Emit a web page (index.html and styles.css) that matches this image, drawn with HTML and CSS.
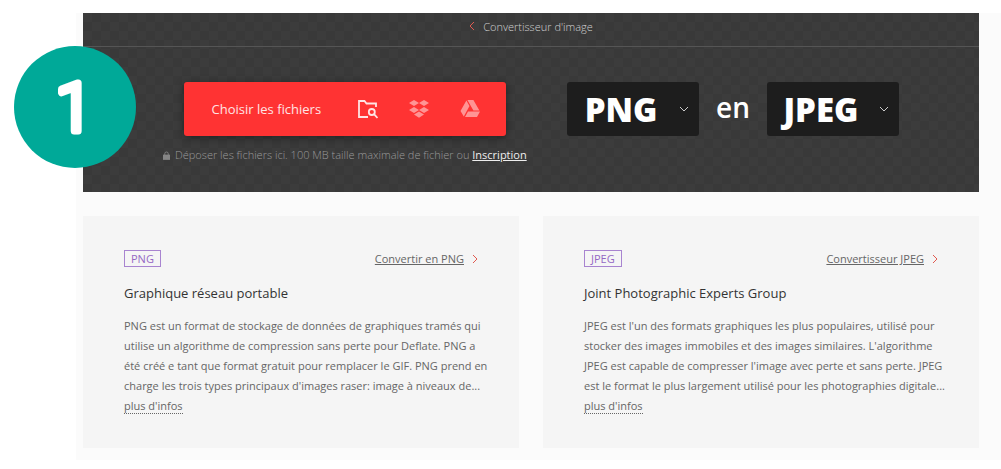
FILE: index.html
```html
<!DOCTYPE html>
<html lang="fr">
<head>
    <meta charset="UTF-8">
    <meta name="viewport" content="width=device-width, initial-scale=1.0">
    <title>Convertisseur PNG en JPEG</title>
    <link rel="stylesheet" href="styles.css">
</head>
<body>
    <div class="page">
        <header class="hero">
            <!-- Step number -->
            <svg class="step" viewBox="0 0 122 122" role="img" aria-label="Étape 1">
                <circle cx="61" cy="61" r="61"/>
                <text x="60" y="85" text-anchor="middle">1</text>
            </svg>

            <nav class="breadcrumb">
                <a href="#">
                    <svg class="chevron" viewBox="0 0 6 10"><path d="M5 1L1 5l4 4"/></svg>
                    Convertisseur d'image
                </a>
            </nav>

            <div class="converter">
                <div class="upload">
                    <div class="upload-bar">
                        <button type="button" class="choose">Choisir les fichiers</button>
                        <button type="button" class="source" aria-label="Ordinateur">
                            <svg viewBox="0 0 20 20" fill="none" stroke="#ffe4e4" stroke-width="1.8">
                                <path d="M10 18H1V2h5.500l2 2.500H18V8"/>
                                <circle cx="13.800" cy="13" r="3"/>
                                <path d="M16 15.200l3.500 3.800"/>
                            </svg>
                        </button>
                        <button type="button" class="source" aria-label="Dropbox">
                            <svg viewBox="0 0 20 20" fill="#ff9494">
                                <path d="M5 1l5 3-5 3-5-3zM15 1l5 3-5 3-5-3zM5 8l5 3-5 3-5-3zM15 8l5 3-5 3-5-3zM10 12.500l5 3-5 3.300-5-3.300z"/>
                            </svg>
                        </button>
                        <button type="button" class="source" aria-label="Google Drive">
                            <svg viewBox="0 0 20 20" fill="#ff9494">
                                <path d="M6.400 1.500L9.500 7 3.800 17.500.500 12zM7.400 1h6l6 10.500h-6zM8 12.500h12L17 18H5z"/>
                            </svg>
                        </button>
                    </div>
                    <p class="note">
                        <svg class="lock" viewBox="0 0 8 10"><path d="M2 5V3a2 2 0 0 1 4 0v2" fill="none" stroke="#858585"/><path d="M0 4h8v6H0z" fill="#858585"/></svg>
                        <span>Déposer les fichiers ici. 100 MB taille maximale de fichier ou <a href="#">Inscription</a></span>
                    </p>
                </div>

                <div class="formats">
                    <div class="format">
                        <select aria-label="Format source">
                            <option>PNG</option>
                            <option>JPEG</option>
                        </select>
                        <svg class="caret" viewBox="0 0 10 6"><path d="M1 1l4 4 4-4"/></svg>
                    </div>
                    <span class="to">en</span>
                    <div class="format">
                        <select aria-label="Format cible">
                            <option>JPEG</option>
                            <option>PNG</option>
                        </select>
                        <svg class="caret" viewBox="0 0 10 6"><path d="M1 1l4 4 4-4"/></svg>
                    </div>
                </div>
            </div>
        </header>

        <main class="cards">
            <section class="card">
                <div class="card-top">
                    <span class="tag">PNG</span>
                    <span class="card-link">
                        <a href="#">Convertir en PNG</a>
                        <svg class="chevron" viewBox="0 0 6 10"><path d="M1 1l4 4-4 4"/></svg>
                    </span>
                </div>
                <h2>Graphique réseau portable</h2>
                <p>PNG est un format de stockage de données de graphiques tramés qui utilise un algorithme de compression sans perte pour Deflate. PNG a été créé e tant que format gratuit pour remplacer le GIF. PNG prend en charge les trois types principaux d'images raser: image à niveaux de...</p>
                <a class="more" href="#">plus d'infos</a>
            </section>

            <section class="card">
                <div class="card-top">
                    <span class="tag">JPEG</span>
                    <span class="card-link">
                        <a href="#">Convertisseur JPEG</a>
                        <svg class="chevron" viewBox="0 0 6 10"><path d="M1 1l4 4-4 4"/></svg>
                    </span>
                </div>
                <h2>Joint Photographic Experts Group</h2>
                <p>JPEG est l'un des formats graphiques les plus populaires, utilisé pour stocker des images immobiles et des images similaires. L'algorithme JPEG est capable de compresser l'image avec perte et sans perte. JPEG est le format le plus largement utilisé pour les photographies digitale...</p>
                <a class="more" href="#">plus d'infos</a>
            </section>
        </main>
    </div>
</body>
</html>
```
FILE: styles.css
```css
* {
    box-sizing: border-box;
}

body {
    margin: 0;
    background: #fff;
    font-family: "Open Sans", "Noto Sans", sans-serif;
    font-size: 11px;
    color: #666;
}

.page {
    margin: 13px 0 8px 76px;
    padding: 0 22px 12px 7px;
    background: #fbfbfb;
}

/* Dark header with a checkerboard */
.hero {
    position: relative;
    padding-bottom: 28px;
    background: repeating-conic-gradient(#393939 0 25%, #3c3c3c 0 50%) 0 0 / 18px 18px;
}

.step {
    position: absolute;
    top: 33px;
    left: -69px;
    width: 122px;
    height: 122px;
}

.step circle {
    fill: #00a998;
}

.step text {
    font-family: Roboto, sans-serif;
    font-size: 66px;
    font-weight: 300;
    fill: #fff;
    stroke: #fff;
    stroke-width: 7px;
    stroke-linejoin: round;
}

.breadcrumb {
    display: flex;
    justify-content: center;
    height: 34px;
    padding-top: 4px;
    border-bottom: 1px solid #555;
}

.breadcrumb a {
    display: flex;
    align-items: center;
    gap: 8px;
    height: 18px;
    font-weight: 300;
    color: #d0d0d0;
    text-decoration: none;
}

.chevron {
    width: 6px;
    height: 10px;
    fill: none;
    stroke: #e05a50;
}

.converter {
    display: flex;
    justify-content: space-between;
    align-items: flex-start;
    padding: 35px 80px 0;
}

.upload {
    display: flex;
    flex-direction: column;
    align-items: center;
}

.upload-bar {
    display: flex;
    align-items: center;
    gap: 31px;
    height: 54px;
    padding: 0 26px 0 28px;
    border-radius: 3px;
    background: #f33;
    box-shadow: 0 2px 8px rgba(0, 0, 0, 0.4);
}

.upload-bar button {
    padding: 0;
    border: none;
    background: none;
    font-family: inherit;
    color: #ffe4e4;
    cursor: pointer;
}

.upload-bar .choose {
    margin-right: 6px;
    font-size: 13px;
}

.source svg {
    display: block;
    width: 20px;
    height: 20px;
}

.note {
    display: flex;
    align-items: center;
    gap: 5px;
    margin: 10px 0 0;
    font-weight: 300;
    line-height: 18px;
    color: #999;
    white-space: nowrap;
}

.note a {
    font-weight: 400;
    color: #eee;
}

.lock {
    width: 7px;
    height: 9px;
}

/* Format drop-downs */
.formats {
    display: flex;
    align-items: center;
    gap: 17px;
}

.format {
    position: relative;
}

.format select {
    appearance: none;
    width: 132px;
    height: 54px;
    padding: 0 24px 0 0;
    border: none;
    border-radius: 3px;
    background: #1d1d1d;
    font-family: inherit;
    font-size: 33px;
    font-weight: 800;
    text-align: center;
    text-align-last: center;
    color: #fff;
}

.caret {
    position: absolute;
    top: 24px;
    right: 10px;
    width: 10px;
    height: 6px;
    fill: none;
    stroke: #ccc;
    pointer-events: none;
}

.to {
    font-size: 28px;
    font-weight: 600;
    line-height: 32px;
    padding-bottom: 4px;
    color: #fff;
}

/* Cards */
.cards {
    display: grid;
    grid-template-columns: 1fr 1fr;
    gap: 24px;
    margin-top: 24px;
}

.card {
    padding: 34px 28px 34px 41px;
    background: #f5f5f5;
}

.card-top {
    display: flex;
    justify-content: space-between;
    align-items: center;
    margin-right: 13px;
}

.tag {
    padding: 0 6px;
    border: 1px solid #a884d0;
    line-height: 15px;
    color: #9468c4;
}

.card-link {
    display: flex;
    align-items: center;
    gap: 8px;
}

.card-link a {
    color: #666;
}

.card h2 {
    margin: 16px 0 13px;
    font-size: 13px;
    font-weight: 400;
    line-height: 20px;
    color: #333;
}

.card p {
    margin: 0;
    line-height: 20px;
}

.more {
    display: inline-block;
    line-height: 14px;
    margin-top: 3px;
    border-bottom: 1px dotted #666;
    color: #666;
    text-decoration: none;
}
```
